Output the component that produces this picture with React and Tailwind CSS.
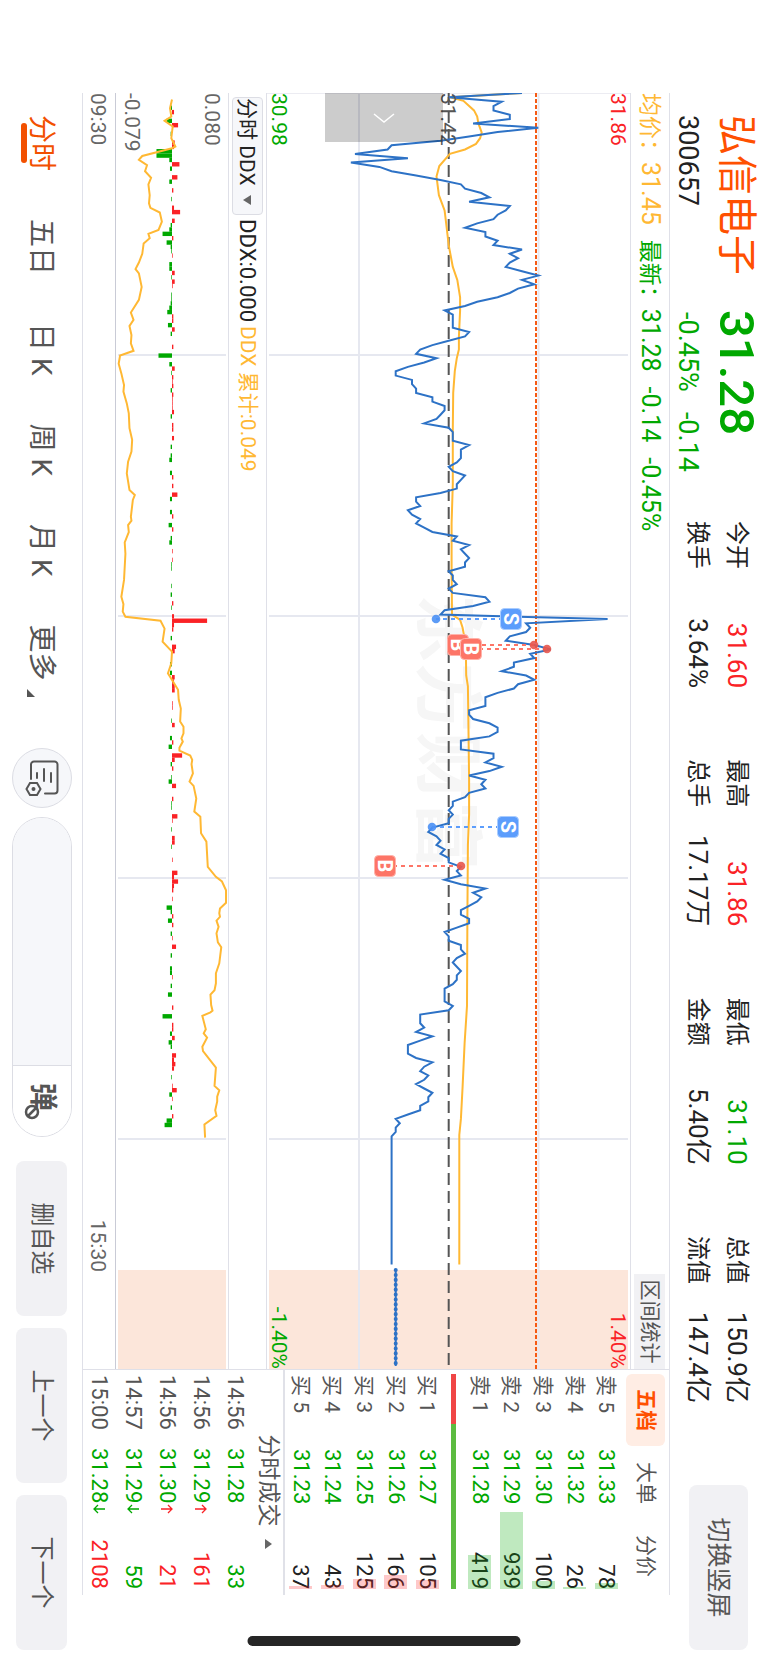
import React, { useState } from 'react';

const stats = [
  { rows: [['今开', '31.60', 'text-[#fa2226]'], ['换手', '3.64%', 'text-[#222222]']] },
  { rows: [['最高', '31.86', 'text-[#fa2226]'], ['总手', '17.17万', 'text-[#222222]']] },
  { rows: [['最低', '31.10', 'text-[#00a800]'], ['金额', '5.40亿', 'text-[#222222]']] },
  { rows: [['总值', '150.9亿', 'text-[#222222]'], ['流值', '147.4亿', 'text-[#222222]']] },
];

const sells = [
  ['卖 5', '31.33', 78],
  ['卖 4', '31.32', 26],
  ['卖 3', '31.30', 100],
  ['卖 2', '31.29', 939],
  ['卖 1', '31.28', 419],
];

const buys = [
  ['买 1', '31.27', 105],
  ['买 2', '31.26', 166],
  ['买 3', '31.25', 125],
  ['买 4', '31.24', 43],
  ['买 5', '31.23', 37],
];

const trades = [
  { time: '14:56', price: '31.28', dir: '', volume: 33, buy: false },
  { time: '14:56', price: '31.29', dir: 'up', volume: 161, buy: true },
  { time: '14:56', price: '31.30', dir: 'up', volume: 21, buy: true },
  { time: '14:57', price: '31.29', dir: 'down', volume: 59, buy: false },
  { time: '15:00', price: '31.28', dir: 'down', volume: 2108, buy: true },
];

const periods = ['分时', '五日', '日 K', '周 K', '月 K'];

// 每分钟价格，相对昨收 31.42 的偏移（分）
const prices = [
  18, 0, 13, 11, 11, 15, 15, 6, 22, 12, 5, -2, -14, -15, -23, -10, -24, -17, -14, -8,
  -2, 3, 4, 8, 10, 5, 15, 14, 12, 11, 7, 4, 9, 9, 12, 11, 18, 15, 17, 15,
  14, 18, 22, 18, 21, 17, 15, 12, 7, 4, -1, 1, 1, 1, 1, 5, 4, 0, -4, -7,
  -8, -3, -6, -10, -13, -13, -9, -9, -8, -8, -4, -4, -1, -1, -2, -3, -6, 0, 1, 1,
  1, 5, 3, 3, 3, 2, 0, 1, 4, 3, 2, 2, -2, -8, -8, -7, -10, -9, -7, -8,
  -6, -4, 2, 1, 5, 3, 4, 5, 4, 4, 0, 1, 1, 2, 0, 1, 9, 10, 6, -1,
  -2, 39, 19, 20, 19, 15, 14, 21, 25, 20, 21, 16, 16, 13, 19, 21, 17, 16, 12, 9,
  9, 9, 5, 5, 6, 10, 12, 12, 10, 3, 3, 3, 11, 11, 9, 13, 10, 5, 9, 8,
  9, 5, 4, 1, 1, 0, 1, 0, 0, -4, -5, -3, -2, -3, -1, -2, 0, 0, 3, 2,
  3, -1, 3, 9, 6, 8, 7, 5, 3, 3, 5, 5, 2, -1, 0, 0, 3, 3, 4, 2,
  1, 2, 3, 2, 2, 1, -1, -1, -1, -1, 1, 0, -7, -7, -7, -6, -8, -4, -7, -10,
  -10, -10, -8, -4, -6, -7, -5, -6, -8, -6, -4, -5, -5, -7, -7, -10, -13, -12, -13, -13,
  -14,
];

// 均价线 [分钟, 偏移]
const averages = [
  [0, 18], [1, 0.4], [1.8, 3.6], [2.8, 4.8], [4, 6.2], [5.4, 7], [7, 7.3], [9.1, 8.1], [10.4, 7.7],
  [11.7, 6.7], [13, 4], [14, 0.3], [16.8, -2.3], [19.2, -3], [23.5, -2.4], [27, -1], [31, -0.5],
  [35, 0], [40, 1], [43, 2.1], [47, 2.8], [50, 2.8], [56, 2.5], [59, 2.5], [61, 2], [64, 1.5],
  [69, 1.1], [77.5, 1], [90, 1], [99, 0.7], [109, 0.7], [120, 0.8], [121.2, 2.8], [123, 3.4],
  [127, 4.2], [134, 4.3], [136.5, 4.7], [143, 4.8], [158, 5], [166, 5], [173, 4.7], [189, 4.6],
  [210, 4.5], [218.6, 3.9], [228.6, 3.4], [236, 3], [239.7, 2.6], [269.5, 2.6],
];

// DDX 累计 [分钟, 千分值]
const ddxTotal = [
  [1.5, 0], [3.5, -3], [5.4, -1], [6.4, -11], [7.7, 1], [10.4, -1], [12.3, 5], [12.7, 0], [14.5, -44],
  [15.4, -49], [16.6, -37], [18, -40], [19.5, -31], [21, -35], [23.5, -33], [25.4, -34], [26.4, -32],
  [27.5, -18], [29.6, -15], [31.5, -20], [32.4, -35], [33.4, -33], [34.6, -42], [37, -44], [39, -49],
  [40.5, -54], [41.5, -49], [44.6, -45], [47.6, -49], [50.5, -61], [52.2, -57], [53.6, -63],
  [55.7, -60], [57.6, -61], [59.3, -57], [60.4, -77], [62.3, -79], [64.5, -75], [67.2, -71],
  [68.7, -72], [71.4, -67], [73.7, -64], [77.1, -63], [79.8, -59], [82.5, -60], [84.8, -65],
  [87.5, -67], [91.3, -63], [92.5, -55], [93.6, -58], [97.5, -61], [98.4, -60], [99.4, -65],
  [101, -64], [103.4, -70], [106, -69], [112, -71], [115.9, -75], [117.6, -72], [119.3, -73],
  [120.5, -69], [121.4, -17], [123.2, -11], [126.2, -14], [128.5, 0], [131.2, -1], [133.5, -6],
  [137.3, 9], [139.6, 10], [141.6, 13], [144.6, 12], [145.8, 17], [147.3, 17], [148.5, 14],
  [149.2, 16], [150.6, 11], [151.3, 11], [152.4, 27], [153.4, 30], [154.4, 29], [156.5, 31],
  [158.4, 26], [159.4, 32], [162.3, 36], [165.3, 33], [166.5, 42], [170.3, 43], [172.2, 51],
  [178, 53], [180.3, 65], [181.4, 74], [183.4, 80], [186.3, 80], [187.6, 71], [188.7, 70],
  [189.5, 71], [190.4, 66], [191.8, 69], [193.3, 66], [195.4, 68], [196.5, 73], [200.2, 70],
  [202.5, 65], [204.8, 65], [206.4, 63], [207.4, 57], [209.8, 58], [211.1, 60], [211.5, 57],
  [212.3, 45], [215.4, 50], [216.3, 47], [217.3, 52], [219.4, 45], [220.4, 46], [224.2, 65],
  [228.4, 63], [229.4, 70], [230.9, 67], [232, 67], [234, 64], [235.3, 66], [237.3, 48], [240.3, 49],
];

// DDX 柱 [分钟, 千分值]
const ddxBars = [
  [3, -3], [4, 3], [6, -8], [7, 9], [9, -2], [11, 4], [12, 3], [13, -23], [14, -23], [15, -4], [16, 11],
  [17, -3], [19, 8], [20, -4], [22, 2], [24, -1], [26, 3], [27, 12], [29, 4], [30, -2], [31, -4],
  [32, -14], [33, 2], [34, -8], [35, -2], [36, -1], [37, 1], [39, -4], [40, -4], [41, 4], [42, -1],
  [43, 4], [44, 1], [46, -1], [47, -1], [48, -2], [49, -4], [50, -7], [51, 2], [52, 2], [53, -6],
  [54, 4], [55, -2], [58, 2], [60, -20], [62, -4], [63, 4], [64, -1], [65, 2], [66, 1], [67, 2],
  [68, -2], [69, 2], [70, 1], [71, 1], [72, 1], [73, 3], [74, -2], [76, 2], [77, 2], [79, 3], [81, -2],
  [83, -2], [84, -4], [87, -3], [88, 2], [90, 2], [92, 8], [93, -3], [96, -3], [97, 2], [99, -5],
  [100, 2], [102, -2], [103, -4], [105, 1], [107, 1], [108, -1], [109, -1], [113, -1], [115, -2],
  [117, 2], [118, -1], [120, 3], [121, 52], [122, 3], [123, 2], [125, -2], [127, 6], [128, 4],
  [131, -3], [133, -3], [134, 4], [135, 3], [136, 4], [137, 4], [140, 1], [141, 1], [144, -1],
  [145, 4], [148, -3], [149, 2], [150, -5], [152, 15], [153, 4], [154, -2], [155, 2], [157, -1],
  [158, -5], [159, 6], [162, 2], [163, -1], [164, -1], [166, 8], [167, 1], [169, -1], [171, 4],
  [172, 4], [173, -1], [176, 1], [179, 8], [180, 3], [181, 9], [182, 3], [183, 2], [185, 1],
  [187, -8], [188, -2], [189, 2], [190, -6], [191, 2], [193, -2], [194, 1], [196, 6], [198, -2],
  [201, -3], [202, -3], [203, 1], [205, -2], [207, -6], [210, 2], [212, -14], [214, 2], [215, 2],
  [216, -3], [217, 4], [218, -5], [219, -2], [221, 6], [222, 3], [223, 5], [224, 3], [226, -1],
  [228, 1], [229, 7], [230, -4], [231, 1], [233, -2], [235, 2], [236, -8], [237, -11],
];

// 买卖点
const marks = [
  { type: 'S', x: 526, badge: 119, dot: 194 },
  { type: 'B', x: 552, badge: 172, dot: 96 },
  { type: 'B', x: 556, badge: 159, dot: 83 },
  { type: 'S', x: 734, badge: 122, dot: 198 },
  { type: 'B', x: 773, badge: 245, dot: 169 },
];

const STEP = 4.347;
const priceY = (c) => 181.3 - c * 4.075;
const ddxY = (v) => 56.5 - v * 0.681;
const toPoints = (list, fy) => list.map(([n, v]) => `${(n * STEP).toFixed(1)},${fy(v).toFixed(1)}`).join(' ');

function PriceChart() {
  const line = prices.map((c, n) => [n, c]).concat([[269.5, -14]]);
  return (
    <svg viewBox="0 0 1276 363" preserveAspectRatio="none" className="block h-full w-full" aria-hidden="true">
      <text x="501" y="207" fontSize="69" fontWeight="700" fill="#f6f6f6">东方财富</text>
      <rect x="1177" y="2" width="99" height="359" fill="#fce6da" />
      <g stroke="#e6e8f0" strokeWidth="2">
        <path d="M0 91.5H1276M0 271H1276" />
        <path d="M262 2V361M523 2V361M785 2V361M1046 2V361" />
        <path d="M0.5 0V363" stroke="#ececf2" strokeWidth="1" />
      </g>
      <path d="M0 181.3H1276" stroke="#555555" strokeWidth="2" strokeDasharray="12 6" />
      <path d="M0 94H1276" stroke="#f55a14" strokeWidth="2" strokeDasharray="4 2" />
      <polyline points={toPoints(averages, priceY)} fill="none" stroke="#ffb833" strokeWidth="2" />
      <polyline points={toPoints(line, priceY)} fill="none" stroke="#2d72c6" strokeWidth="2" />
      <path d="M1177 234.3H1273" stroke="#2d72c6" strokeWidth="2" />
      <path d="M1177 234.3H1274" stroke="#2d72c6" strokeWidth="4" strokeLinecap="round" strokeDasharray="0.1 4.8" />
      {marks.map((m) => {
        const sell = m.type === 'S';
        const color = sell ? '#5c9dfc' : '#fd7567';
        return (
          <g key={m.x}>
            <path d={`M${m.x} ${m.badge}V${m.dot}`} stroke={color} strokeWidth="2" strokeDasharray="4 4" />
            <circle cx={m.x} cy={m.dot} r="4.3" fill={sell ? '#4a90f5' : '#e8574d'} fillOpacity="0.9" />
            <rect x={m.x - 10.5} y={m.badge - 10.5} width="21" height="21" rx="4" fill={color} stroke={sell ? '#a9ccff' : '#ffb3aa'} />
            <text x={m.x} y={m.badge + 7} textAnchor="middle" fontSize="20" fontWeight="700" fill="#ffffff">{m.type}</text>
          </g>
        );
      })}
    </svg>
  );
}

function DdxChart() {
  return (
    <svg viewBox="0 0 1276 113" preserveAspectRatio="none" className="block h-full w-full" aria-hidden="true">
      <rect x="1177" y="2" width="99" height="109" fill="#fce6da" />
      <path d="M262 2V111M523 2V111M785 2V111M1046 2V111" stroke="#e6e8f0" strokeWidth="2" />
      {ddxBars.map(([n, v]) => (
        <rect
          key={n}
          x={(n + 0.4) * STEP - 2.2}
          y={Math.min(ddxY(0), ddxY(v))}
          width="4.4"
          height={Math.abs(v) * 0.681}
          fill={v > 0 ? '#fa2226' : '#00a800'}
        />
      ))}
      <polyline points={toPoints(ddxTotal, ddxY)} fill="none" stroke="#ffb833" strokeWidth="2" />
    </svg>
  );
}

function OrderTable({ rows, barClass }) {
  return (
    <table className="h-[158px] w-full table-fixed text-[22px] leading-[24px]">
      <tbody>
        {rows.map(([label, price, qty]) => (
          <tr key={label}>
            <th scope="row" className="w-[75px] p-0 pl-px text-left text-[21px] font-normal text-[#555555]">{label}</th>
            <td className="w-[62px] p-0 text-[#00a800]">{price}</td>
            <td className="p-0 text-right text-[#222222]">
              <div className="relative h-[23px]">
                <span className="relative">{qty}</span>
                <span className={`absolute inset-y-0 right-0 ${barClass}`} style={{ width: Math.max(2, qty * 0.082) }} />
              </div>
            </td>
          </tr>
        ))}
      </tbody>
    </table>
  );
}

function Arrow({ dir }) {
  const up = dir === 'up';
  return (
    <svg viewBox="0 0 10 12" className={`h-3 w-[10px] ${up ? 'text-[#fa2226]' : 'text-[#00a800]'}`} fill="none" stroke="currentColor" strokeWidth="1.3" aria-hidden="true">
      <path d={up ? 'M5 12V1M1 5L5 1L9 5' : 'M5 0V11M1 7L5 11L9 7'} />
    </svg>
  );
}

function QuotePanel() {
  const [tab, setTab] = useState('五档');
  return (
    <aside className="flex w-[226px] shrink-0 flex-col border-l border-[#dfe0e8]">
      <div className="flex h-[47px] shrink-0 items-start gap-px pl-1 pt-1">
        {['五档', '大单', '分价'].map((name) => (
          <button
            key={name}
            onClick={() => setTab(name)}
            className={`h-[39px] w-[72px] rounded-md text-[21px] leading-[39px] ${
              tab === name ? 'bg-[#ffede4] font-bold text-[#ff5000]' : 'text-[#555555]'
            }`}
          >
            {name}
          </button>
        ))}
      </div>
      <div className="flex flex-1 flex-col justify-between pl-1 pr-[6px]">
        <OrderTable rows={sells} barClass="bg-[#00a800]/25" />
        <div className="flex h-[5px]">
          <div className="w-[50px] bg-[#f04646]" />
          <div className="flex-1 bg-[#5cbb40]" />
        </div>
        <OrderTable rows={buys} barClass="bg-[#fa2226]/25" />
      </div>
      <div className="shrink-0 border-t-2 border-[#e0e1e8] pl-1 pr-[6px]">
        <button className="flex h-[30px] w-full items-center justify-center gap-3 pl-5 text-[23px] leading-[30px] text-[#555555]">
          分时成交
          <svg viewBox="0 0 10 8" className="h-2 w-[10px]" fill="#666666" aria-hidden="true">
            <path d="M5 0L10 7H0Z" />
          </svg>
        </button>
        <table className="w-full table-fixed text-[22px] leading-6">
          <tbody>
            {trades.map((t, i) => (
              <tr key={i} className="h-[34px]">
                <td className="w-[74px] p-0 pl-px pt-[2px] text-[#555555]">{t.time}</td>
                <td className="w-[74px] p-0 pt-[2px] text-[#00a800]">
                  <span className="flex items-center gap-px">
                    {t.price}
                    {t.dir && <Arrow dir={t.dir} />}
                  </span>
                </td>
                <td className={`p-0 pt-[2px] text-right ${t.buy ? 'text-[#fa2226]' : 'text-[#00a800]'}`}>{t.volume}</td>
              </tr>
            ))}
          </tbody>
        </table>
      </div>
    </aside>
  );
}

function Header() {
  return (
    <header className="flex h-[98px] shrink-0 items-start pl-[115px] pr-[13px]">
      <div className="w-[195px] pt-2">
        <h1 className="text-[40px] leading-[48px] text-[#ff5000]">弘信电子</h1>
        <p className="mt-2 text-[27px] leading-[32px] text-[#222222]">300657</p>
      </div>
      <div className="w-[211px] pt-2 text-[#00a800]">
        <p className="text-[49px] font-medium leading-[48px]">31.28</p>
        <p className="mt-2 flex gap-5 pl-[2px] text-[27px] leading-[32px]">
          <span>-0.45%</span>
          <span>-0.14</span>
        </p>
      </div>
      <div className="flex flex-1 justify-between pt-3">
        {stats.map((col, i) => (
          <dl key={i} className="w-[167px]">
            {col.rows.map(([label, value, color]) => (
              <div key={label} className="flex justify-between leading-[39px]">
                <dt className="text-[24px] text-[#222222]">{label}</dt>
                <dd className={`text-[26px] ${color}`}>{value}</dd>
              </div>
            ))}
          </dl>
        ))}
      </div>
      <button className="ml-[82px] mt-5 h-[59px] w-[165px] rounded-lg bg-[#f1f1f4] text-[25px] text-[#555555]">切换竖屏</button>
    </header>
  );
}

function Footer() {
  const [active, setActive] = useState('分时');
  return (
    <footer className="flex h-[82px] shrink-0 items-center pb-[2px] pl-[115px] pr-[13px] text-[#555555]">
      <nav className="flex gap-12 pt-[2px] text-[28px] leading-[40px]">
        {periods.map((name) => (
          <button
            key={name}
            onClick={() => setActive(name)}
            className={`relative whitespace-nowrap ${active === name ? 'text-[#f25000]' : ''}`}
          >
            {name}
            {active === name && <span className="absolute bottom-0 left-2 right-2 h-[6px] rounded-full bg-[#f25000]" />}
          </button>
        ))}
        <button aria-haspopup="menu" className="flex items-end gap-2 whitespace-nowrap">
          更多
          <svg viewBox="0 0 8 8" className="mb-[6px] h-2 w-2" fill="#555555" aria-hidden="true">
            <path d="M8 0V8H0Z" />
          </svg>
        </button>
      </nav>
      <button aria-label="设置" className="ml-auto flex h-[60px] w-[60px] items-center justify-center rounded-full border border-[#dcdde4] bg-[#f6f7fa]">
        <svg viewBox="0 0 36 34" className="h-[34px] w-9" fill="none" stroke="#555555" strokeWidth="2" strokeLinecap="round" aria-hidden="true">
          <path d="M19 28H4.500a3 3 0 0 1-3-3V4.500a3 3 0 0 1 3-3H30.500a3 3 0 0 1 3 3V14" />
          <path d="M13 8H22M9 15H21M13 22H18" />
          <path d="M29 18.500L35 22V29L29 32.500L23 29V22Z" />
          <circle cx="29" cy="25.500" r="1" />
        </svg>
      </button>
      <div className="ml-[9px] flex h-[60px] w-[320px] overflow-hidden rounded-full border border-[#dcdde4]">
        <input type="text" aria-label="发弹幕" className="min-w-0 flex-1 bg-[#f6f7fa] px-6 text-[22px] outline-none" />
        <button aria-label="弹幕开关" className="relative w-[71px] border-l border-[#dcdde4] bg-white pr-2 text-[28px] font-bold leading-none">
          弹
          <svg viewBox="0 0 16 16" className="absolute bottom-[11px] left-[38px] h-4 w-4" fill="#ffffff" stroke="#555555" strokeWidth="2.5" aria-hidden="true">
            <circle cx="8" cy="8" r="6" />
            <path d="M4 4L12 12" />
          </svg>
        </button>
      </div>
      <div className="ml-6 flex gap-3 text-[24px]">
        {['删自选', '上一个', '下一个'].map((name) => (
          <button key={name} className="h-[51px] w-[155px] rounded-lg bg-[#f1f1f4]">{name}</button>
        ))}
      </div>
    </footer>
  );
}

function App() {
  return (
    <div className="h-screen w-screen overflow-hidden bg-white">
      {/* 横屏页面：整体顺时针旋转 90° */}
      <div
        lang="zh-CN"
        className="relative flex h-[100vw] w-[100vh] origin-top-left translate-x-[100vw] rotate-90 flex-col font-['Roboto','Noto_Sans_CJK_SC',sans-serif]"
      >
        <Header />

        <main className="ml-[93px] mr-[68px] flex min-h-0 flex-1 border-y border-[#dfe0e8]">
          <section className="flex min-w-0 flex-1 flex-col">
            <div className="flex h-[39px] shrink-0 items-center border-b border-[#dfe0e8] text-[25px] leading-[38px]">
              <div className="flex flex-1 gap-[15px] whitespace-nowrap text-[#00a800]">
                <span className="text-[#ffb833]"><span className="text-[23px]">均价：</span>31.45</span>
                <span><span className="text-[23px]">最新：</span>31.28</span>
                <span>-0.14</span>
                <span>-0.45%</span>
              </div>
              <button className="h-[31px] w-[95px] bg-[#f1f1f4] text-[21px] leading-[31px] text-[#555555]">区间统计</button>
            </div>

            <div className="relative min-h-0 flex-1 text-[21px] leading-6">
              <PriceChart />
              <div className="absolute inset-0 flex flex-col justify-between text-[#00a800]">
                <div className="flex justify-between text-[#fa2226]"><span>31.86</span><span>1.40%</span></div>
                <div className="text-[#555555]">31.42</div>
                <div className="flex justify-between"><span>30.98</span><span>-1.40%</span></div>
              </div>
              <button aria-label="展开" className="absolute left-0 top-[187px] flex h-[118px] w-[49px] items-center justify-center bg-black/20">
                <svg viewBox="0 0 10 22" className="h-[22px] w-[10px]" fill="none" stroke="#ffffff" strokeWidth="1.500" aria-hidden="true">
                  <path d="M1 1L9 11L1 21" />
                </svg>
              </button>
            </div>

            <div className="flex h-[39px] shrink-0 items-center gap-1 border-y border-[#dfe0e8] pl-1 text-[21px] leading-[31px]">
              <div className="relative">
                <select aria-label="指标" className="h-[31px] w-[118px] appearance-none rounded border border-[#dcdde4] bg-[#f6f7fa] text-[#222222]">
                  <option>分时 DDX</option>
                </select>
                <svg viewBox="0 0 10 8" className="pointer-events-none absolute right-[10px] top-3 h-2 w-[10px]" fill="#666666" aria-hidden="true">
                  <path d="M0 0H10L5 8Z" />
                </svg>
              </div>
              <span className="text-[22px] text-[#222222]">DDX:0.000</span>
              <span className="text-[#ffb833]">DDX 累计:0.049</span>
            </div>

            <div className="relative h-[113px] shrink-0 border-b border-[#c9cbd6] text-[21px] leading-6">
              <DdxChart />
              <div className="absolute inset-0 flex flex-col justify-between py-1 text-[#666666]">
                <span>0.080</span>
                <span>-0.079</span>
              </div>
            </div>

            <div className="flex h-8 shrink-0 justify-between pr-[97px] pt-px text-[21px] leading-8 text-[#666666]">
              <span>09:30</span>
              <span>15:30</span>
            </div>
          </section>

          <QuotePanel />
        </main>

        <Footer />

        <div className="absolute right-[17px] top-1/2 h-[273px] w-[10px] -translate-y-1/2 rounded-full bg-[#262626]" />
      </div>
    </div>
  );
}

export default App;
